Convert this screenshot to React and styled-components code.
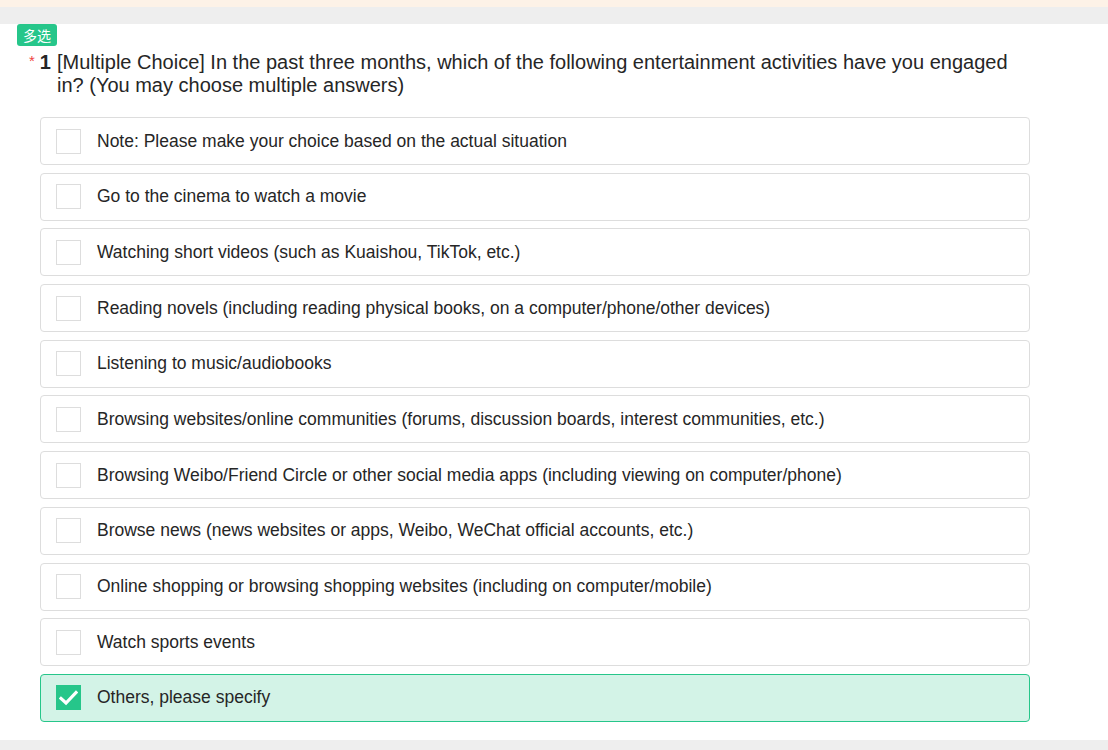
import styled, { createGlobalStyle } from 'styled-components';

const GlobalStyle = createGlobalStyle`
  body {
    margin: 0;
    background: #ffffff;
    font-family: "Liberation Sans", Arial, sans-serif;
  }
`;

const TopStrip = styled.div`
  height: 7px;
  background: #fdf2e7;
`;

const GrayBand = styled.div`
  height: ${props => props.h}px;
  background: #eeeeee;
`;

const Card = styled.div`
  background: #fff;
  height: 716px;
  padding: 0 0 0 17px;
  box-sizing: border-box;
`;

const Badge = styled.span`
  display: inline-block;
  height: 22px;
  line-height: 22px;
  padding: 0 6px;
  background: #26c68a;
  color: #fff;
  font-size: 14px;
  border-radius: 3px;
  font-family: "Noto Sans CJK SC", "Liberation Sans", sans-serif;
`;

const Title = styled.div`
  display: flex;
  margin: 5px 0 0 12px;
  width: 983px;
  font-size: 20px;
  line-height: 23px;
  color: #262626;
`;

const Star = styled.span`
  color: #f0443f;
  font-size: 15px;
  margin-right: 5px;
  line-height: 20px;
`;

const Num = styled.span`
  font-weight: bold;
  margin-right: 6px;
  flex-shrink: 0;
`;

const Options = styled.div`
  margin: 20px 0 0 23px;
  width: 990px;
  display: flex;
  flex-direction: column;
  gap: 7.7px;
`;

const Option = styled.div`
  height: 48px;
  box-sizing: border-box;
  display: flex;
  align-items: center;
  padding-left: 15px;
  border: 1px solid ${props => (props.checked ? '#26c68a' : '#dddddd')};
  background: ${props => (props.checked ? '#d3f3e7' : '#ffffff')};
  border-radius: 4px;
  font-size: 17.5px;
  color: #262626;
`;

const Box = styled.span`
  width: 25px;
  height: 25px;
  box-sizing: border-box;
  border: 1px solid ${props => (props.checked ? '#26c68a' : '#dddddd')};
  background: ${props => (props.checked ? '#26c68a' : '#ffffff')};
  display: flex;
  align-items: center;
  justify-content: center;
  margin-right: 16px;
  flex-shrink: 0;
`;

const options = [
  'Note: Please make your choice based on the actual situation',
  'Go to the cinema to watch a movie',
  'Watching short videos (such as Kuaishou, TikTok, etc.)',
  'Reading novels (including reading physical books, on a computer/phone/other devices)',
  'Listening to music/audiobooks',
  'Browsing websites/online communities (forums, discussion boards, interest communities, etc.)',
  'Browsing Weibo/Friend Circle or other social media apps (including viewing on computer/phone)',
  'Browse news (news websites or apps, Weibo, WeChat official accounts, etc.)',
  'Online shopping or browsing shopping websites (including on computer/mobile)',
  'Watch sports events',
  'Others, please specify',
];

const Check = () => (
  <svg width="19" height="16" viewBox="0 0 19 16">
    <path d="M2 8.5 L7 13 L17 2.5" fill="none" stroke="#fff" strokeWidth="3.2" strokeLinecap="square" />
  </svg>
);

const App = () => (
  <>
    <GlobalStyle />
    <TopStrip />
    <GrayBand h={17} />
    <Card>
      <Badge>多选</Badge>
      <Title>
        <Star>*</Star>
        <Num>1</Num>
        <span>[Multiple Choice] In the past three months, which of the following entertainment activities have you engaged in? (You may choose multiple answers)</span>
      </Title>
      <Options>
        {options.map((text, i) => {
          const checked = i === options.length - 1;
          return (
            <Option key={i} checked={checked}>
              <Box checked={checked}>{checked && <Check />}</Box>
              {text}
            </Option>
          );
        })}
      </Options>
    </Card>
    <GrayBand h={10} />
  </>
);

export default App;
